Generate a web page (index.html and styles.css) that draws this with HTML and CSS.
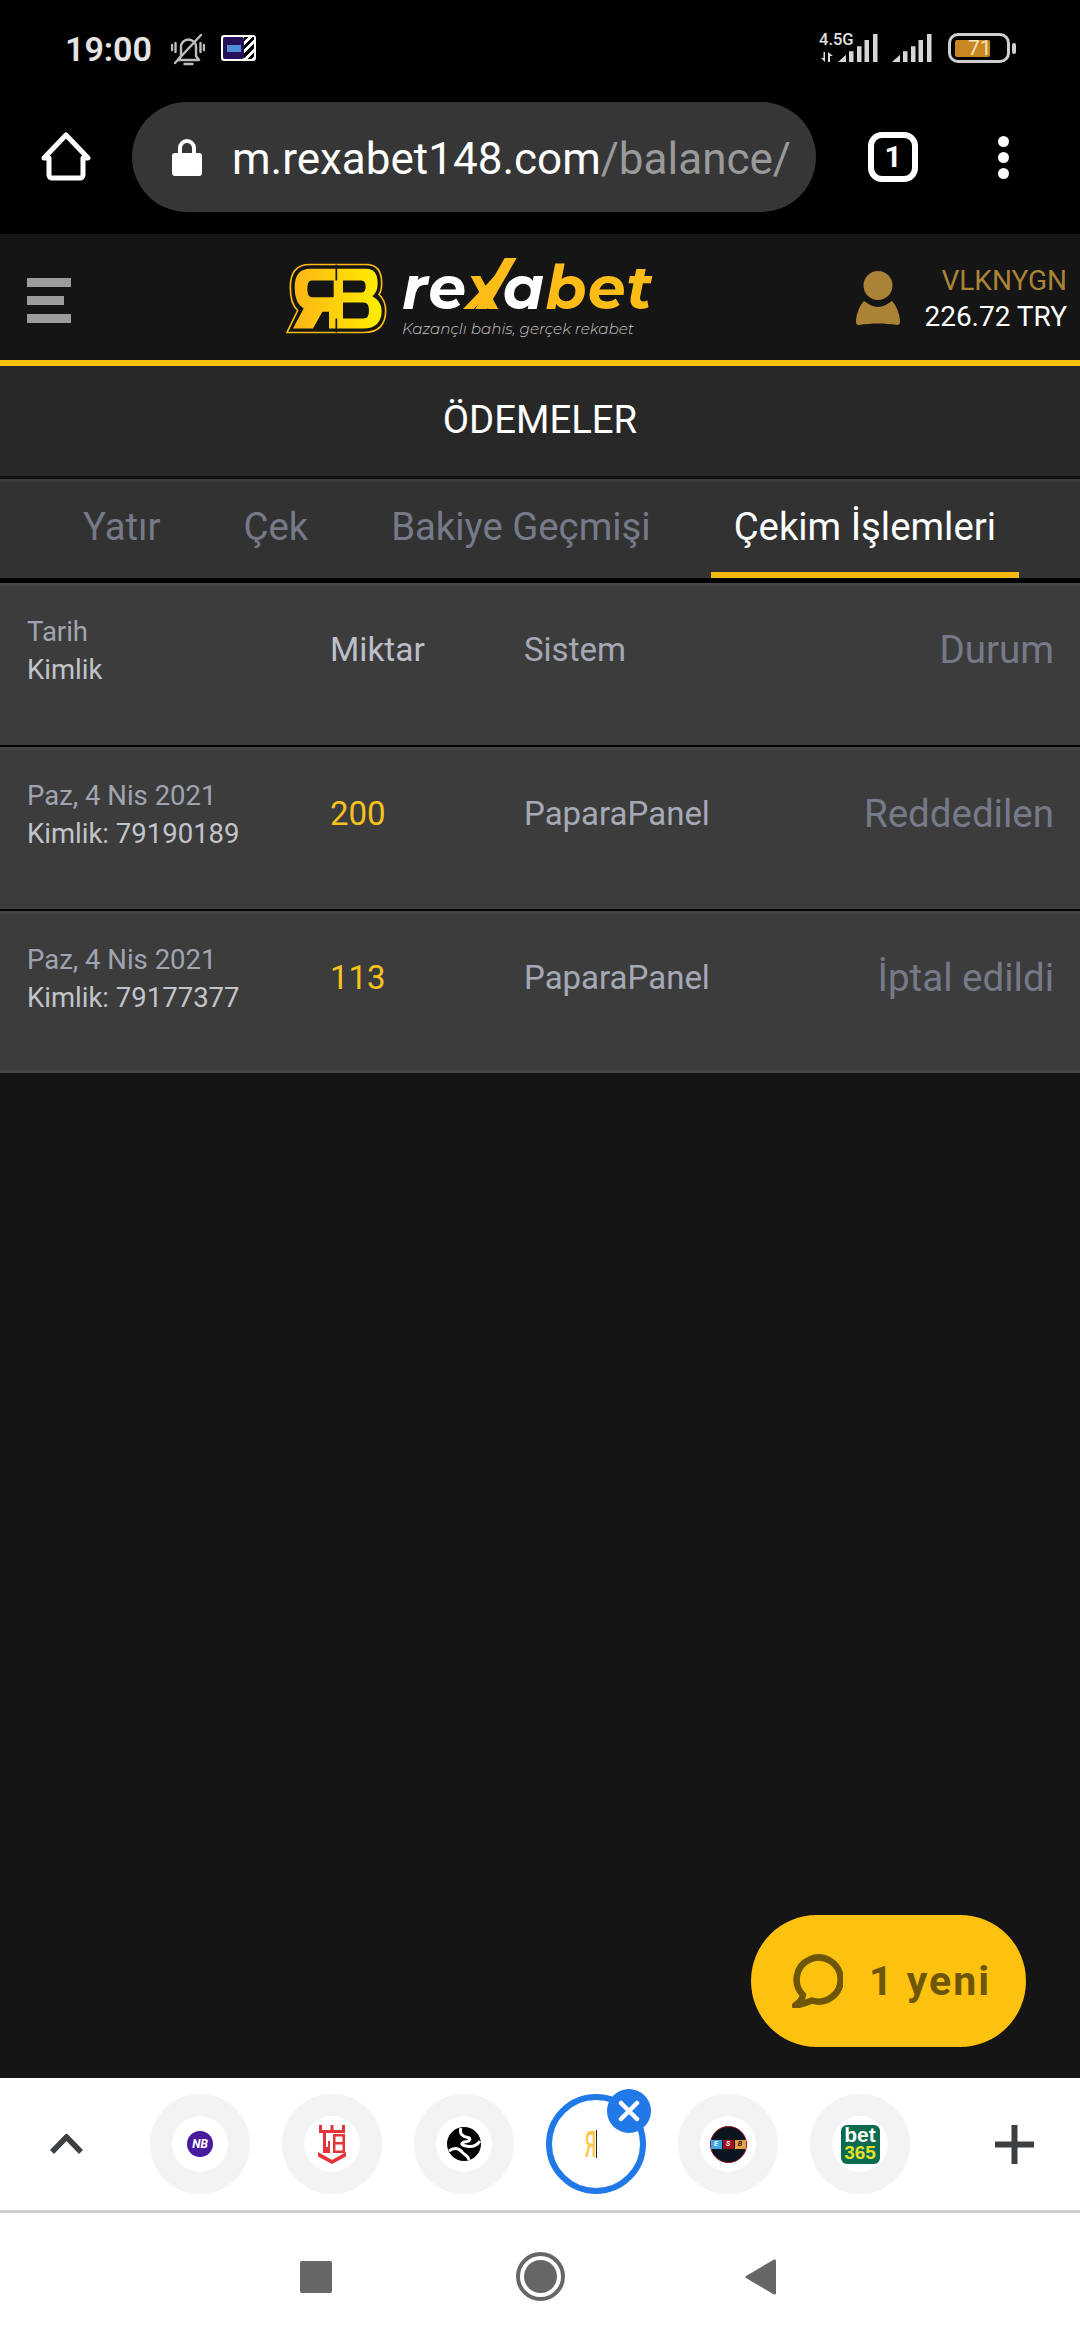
FILE: index.html
```html
<!DOCTYPE html>
<html lang="tr">
<head>
<meta charset="utf-8">
<title>Ödemeler</title>
<link rel="stylesheet" href="styles.css">
</head>
<body>
<div class="screen">
  <div class="chrome">
    <div class="statusbar">
      <span class="time">19:00</span>
      <svg class="bell" viewBox="0 0 34 33" fill="none" stroke="#bdbdbd" stroke-width="2.4" stroke-linecap="round" stroke-linejoin="round"><path d="M10 23V14a7.5 7.5 0 0 1 15 0v9l3 4H7z"/><path d="M13.500 31h8"/><path d="M4 30 30 2"/><path d="M1 12v5M4.500 10v9M33 12v5M29.500 10v9"/></svg>
      <div class="thumb"><div class="thumb-screen"><span class="thumb-dot"></span></div><div class="thumb-stripes"></div></div>
      <div class="status-right">
        <div class="net"><span class="net-label">4.5G</span><svg class="arrows" viewBox="0 0 12 10" fill="#ddd"><path d="M0 6h2.500V0h1.500v10zM7 0l5 4H9v6H7z"/></svg></div>
        <svg class="signal" viewBox="0 0 40 28" fill="#d6d6d6"><path d="M0 28 8 20.700V28zM11 17.300h4.500V28H11zM19 12.300h4.500V28H19zM26.500 6H31v22h-4.500zM35 0h4.500v28H35z"/></svg>
        <svg class="signal" viewBox="0 0 40 28" fill="#d6d6d6"><path d="M0 28 8 20.700V28zM11 17.300h4.500V28H11zM19 12.300h4.500V28H19zM26.500 6H31v22h-4.500zM35 0h4.500v28H35z"/></svg>
        <div class="battery"><div class="battery-fill"></div><span class="battery-text">71</span></div>
        <div class="battery-nub"></div>
      </div>
    </div>
    <div class="toolbar">
      <svg class="home" viewBox="0 0 50 50" fill="none" stroke="#fff" stroke-width="5" stroke-linejoin="round" stroke-linecap="round"><path d="M8 26H3L25 3l22 23h-5v17a3 3 0 0 1-3 3H11a3 3 0 0 1-3-3z"/></svg>
      <div class="address">
        <svg class="lock" viewBox="0 0 30 38" fill="#fff"><path d="M8 16V10a7 7 0 0 1 14 0v6" fill="none" stroke="#fff" stroke-width="4"/><rect y="15" width="30" height="23" rx="3"/></svg>
        <div class="url"><span class="url-host">m.rexabet148.com</span><span class="url-path">/balance/</span></div>
      </div>
      <div class="tabcount">1</div>
      <div class="dots"><span class="dot"></span><span class="dot"></span><span class="dot"></span></div>
    </div>
  </div>

  <header class="site-header">
    <div class="burger"><span class="bar"></span><span class="bar bar-short"></span><span class="bar"></span></div>
    <svg class="rb" viewBox="76 98 306 212">
      <defs><linearGradient id="rbg" x1="0" x2="1" y1="0" y2="0"><stop offset="0" stop-color="#fdb515"/><stop offset="1" stop-color="#ffee00"/></linearGradient></defs>
      <path d="M150 102H320Q366 102 366 158Q366 180 358 192Q378 210 378 240Q378 306 312 306H82L114 240Q92 220 92 170Q92 102 150 102Z" fill="none" stroke="#fdbc17" stroke-width="5"/>
      <path d="M152 115H320Q354 115 354 160Q354 185 338 197Q366 212 366 240Q366 294 310 294H208V244H188L160 294H100L132 234Q105 218 105 170Q105 115 152 115Z" fill="url(#rbg)"/>
      <path d="M155 150H222V200H155Q143 200 143 175Q143 150 155 150ZM250 150H305Q318 150 318 168Q318 186 305 186H250ZM250 216H312Q328 216 328 240Q328 264 312 264H250Z" fill="#151515"/>
      <path d="M230 102V150M230 264V306" stroke="#151515" stroke-width="5"/>
    </svg>
    <div class="brand">
      <div class="wordmark"><span class="w-white">re</span><span class="w-x">x</span><span class="w-white">a</span><span class="w-gold">bet</span></div>
      <div class="tagline">Kazançlı bahis, gerçek rekabet</div>
    </div>
    <div class="user">
      <svg class="avatar" viewBox="0 0 44 55" fill="#ab8337"><circle cx="22" cy="14.500" r="14.500"/><path d="M8 30c3 2 8 6 14 6s11-4 14-6c4 4 8 13 8 21 0 2-1 3-3 3-6-1-13-1.500-19-1.500S9 53 3 54c-2 0-3-1-3-3 0-8 4-17 8-21z"/></svg>
      <div class="user-text"><div class="username">VLKNYGN</div><div class="balance">226.72 TRY</div></div>
    </div>
  </header>

  <main class="main">
    <div class="title">ÖDEMELER</div>
    <nav class="tabs">
      <a class="tab">Yatır</a>
      <a class="tab">Çek</a>
      <a class="tab">Bakiye Geçmişi</a>
      <a class="tab tab-active">Çekim İşlemleri</a>
    </nav>
    <div class="table">
      <div class="row">
        <div class="c-date"><div class="date">Tarih</div><div class="id">Kimlik</div></div>
        <div class="c-head">Miktar</div>
        <div class="c-system">Sistem</div>
        <div class="c-status">Durum</div>
      </div>
      <div class="row">
        <div class="c-date"><div class="date">Paz, 4 Nis 2021</div><div class="id">Kimlik: 79190189</div></div>
        <div class="c-amount">200</div>
        <div class="c-system">PaparaPanel</div>
        <div class="c-status">Reddedilen</div>
      </div>
      <div class="row row-last">
        <div class="c-date"><div class="date">Paz, 4 Nis 2021</div><div class="id">Kimlik: 79177377</div></div>
        <div class="c-amount">113</div>
        <div class="c-system">PaparaPanel</div>
        <div class="c-status">İptal edildi</div>
      </div>
    </div>
    <div class="chat">
      <svg class="chat-icon" viewBox="0 0 51 54" fill="none" stroke="#6d5607" stroke-width="6.500" stroke-linecap="round" stroke-linejoin="round"><path d="M11 41A22 22 0 1 1 20 46.500C14 49 8 51 3 51.500 7 49 10 46 11 41Z"/></svg>
      <span class="chat-text">1 yeni</span>
    </div>
  </main>

  <div class="tabstrip">
    <svg class="chevron" viewBox="0 0 33 20" fill="none" stroke="#3c4043" stroke-width="5.500"><path d="M2 18 16.500 3 31 18"/></svg>
    <div class="bubble"><div class="fav"><span class="fav-nb">NB</span></div></div>
    <div class="bubble"><div class="fav">
      <svg class="fav-tb" viewBox="0 0 28 39" fill="#e5343a"><path d="M1 0h3v5h8.500V0h3v5H24V0h3v8H1zM5 8h3v14h2v-6h2v12H5zM15 9h12v19H15zM17.500 11.500V17h7v-5.500zM17.500 19.500v6h7v-6zM0 27l14 8 14-8v4.500L14 39 0 31.500z" fill-rule="evenodd"/></svg>
    </div></div>
    <div class="bubble"><div class="fav">
      <svg class="fav-globe" viewBox="0 0 34 34"><circle cx="17" cy="17" r="17" fill="#000"/><path d="M14 1C12 7 16 10 21 10.500C24 11 23 14 20 14.500C15 15 13 17 17 18.500C22 20 29 20 33 14M2 24C7 20 12 21 15 25C17 28 21 28 22 33" fill="none" stroke="#fff" stroke-width="3"/></svg>
    </div></div>
    <div class="bubble bubble-active">
      <span class="fav-r">Я</span><span class="fav-line"></span>
      <div class="close"><svg class="close-x" viewBox="0 0 22 22" stroke="#fff" stroke-width="4.500" stroke-linecap="round"><path d="M3 3 19 19M19 3 3 19"/></svg></div>
    </div>
    <div class="bubble"><div class="fav"><div class="fav-esb"><span class="esb e1">E</span><span class="esb e2">S</span><span class="esb e3">B</span></div></div></div>
    <div class="bubble"><div class="fav"><div class="fav-bet"><span class="bet-top">bet</span><span class="bet-bot">365</span></div></div></div>
    <svg class="plus" viewBox="0 0 39 39" fill="#3c4043"><path d="M16.500 0h6v16.500H39v6H22.500V39h-6V22.500H0v-6h16.500z"/></svg>
  </div>
  <div class="navbar">
    <div class="nav-square"></div>
    <div class="nav-circle"><div class="nav-dot"></div></div>
    <svg class="nav-back" viewBox="0 0 31 36" fill="#666"><path d="M29 0.500Q31 0 31 2V34Q31 36 29 35.500L1 19Q0 18 1 17Z"/></svg>
  </div>
</div>
</body>
</html>
```
FILE: styles.css
```css
* { box-sizing: border-box; }
html, body { margin: 0; padding: 0; }
body { font-family: Roboto, "Liberation Sans", sans-serif; background: #151515; }
.screen { width: 1080px; height: 2340px; display: flex; flex-direction: column; overflow: hidden; background: #151515; }

/* browser chrome */
.chrome { background: #000; height: 234px; flex: none; }
.statusbar { height: 102px; display: flex; align-items: flex-start; padding-left: 65px; }
.time { font-size: 34px; font-weight: 600; color: #e4e4e4; line-height: 34px; margin-top: 32px; width: 88px; }
.bell { width: 34px; height: 33px; margin-left: 18px; margin-top: 33px; }
.thumb { width: 35px; height: 26px; margin-left: 16px; margin-top: 35px; display: flex; background: #fff; border-radius: 3px; padding: 2px; }
.thumb-screen { flex: 1; background: #231257; border-radius: 2px; display: flex; align-items: center; justify-content: center; }
.thumb-dot { display: block; width: 14px; height: 7px; background: #4f8fd8; }
.thumb-stripes { width: 10px; background: repeating-linear-gradient(135deg, #000 0 3px, #fff 3px 6px); }
.status-right { margin-left: auto; padding-right: 64px; margin-top: 33px; display: flex; align-items: flex-start; }
.net { width: 33px; display: flex; flex-direction: column; margin-right: -14px; }
.net-label { font-size: 16.500px; font-weight: 500; color: #e0e0e0; line-height: 13px; white-space: nowrap; }
.arrows { width: 12px; height: 10px; margin-top: 6px; margin-left: 2px; }
.signal { width: 40px; height: 28px; margin-top: 1px; }
.signal + .signal { margin-left: 14px; }
.battery { width: 62px; height: 30px; margin-left: 16px; border: 3px solid #cfcfcf; border-radius: 10px; padding: 4px; display: flex; align-items: center; position: relative; }
.battery-fill { width: 35px; height: 17px; background: #c8871f; border-radius: 2px; }
.battery-text { position: absolute; left: 17px; top: 0; line-height: 24px; font-size: 21px; color: #f3e3c4; }
.battery-nub { width: 4px; height: 11px; background: #cfcfcf; border-radius: 2px; margin-left: 2px; margin-top: 10px; }

.toolbar { display: flex; align-items: center; height: 110px; padding-left: 41px; }
.home { width: 50px; height: 50px; flex: none; }
.address { width: 684px; height: 110px; margin-left: 41px; background: #363636; border-radius: 55px; display: flex; align-items: center; padding: 0 22px 0 40px; flex: none; }
.lock { width: 30px; height: 38px; flex: none; }
.url { margin-left: 30px; margin-top: 3px; font-size: 44px; line-height: 60px; white-space: nowrap; }
.url-host { color: #fff; }
.url-path { color: #9a9a9a; }
.tabcount { width: 50px; height: 50px; margin-left: 52px; border: 6px solid #fff; border-radius: 14px; color: #fff; font-size: 30px; font-weight: 700; line-height: 38px; text-align: center; flex: none; }
.dots { margin-left: 80px; display: flex; flex-direction: column; gap: 5px; flex: none; }
.dot { display: block; width: 11px; height: 11px; border-radius: 50%; background: #fff; }

/* site header */
.site-header { height: 132px; flex: none; border-bottom: 6px solid #fdc20f; background: #151515; display: flex; align-items: center; padding-left: 27px; position: relative; }
.burger { width: 44px; display: flex; flex-direction: column; gap: 9px; margin-top: 6px; }
.bar { display: block; height: 9px; background: #9c9c9c; }
.bar-short { width: 37px; }
.rb { width: 102px; height: 71px; margin-left: 214px; margin-top: 2px; flex: none; }
.brand { margin-left: 15px; display: flex; flex-direction: column; margin-top: 6px; }
.wordmark { font-family: Montserrat, "DejaVu Sans", sans-serif; font-style: italic; font-weight: 700; font-size: 60px; line-height: 58px; letter-spacing: 1px; white-space: nowrap; }
.w-white { color: #fff; }
.w-gold { color: #fdbc17; }
.w-x { color: #fdbc17; position: relative; }
.w-x::after { content: ""; position: absolute; left: 24px; top: 7px; width: 12px; height: 51px; background: #fdbc17; transform: skewX(-30deg); }
.tagline { font-family: Montserrat, Lato, sans-serif; font-style: italic; font-weight: 300; font-size: 15.200px; line-height: 24px; color: #c4c4c4; white-space: nowrap; }
.user { margin-left: auto; padding-right: 13px; display: flex; align-items: center; margin-top: 3px; }
.avatar { width: 44px; height: 55px; flex: none; }
.user-text { margin-left: 24px; text-align: right; font-size: 28px; line-height: 36px; }
.username { color: #ab8337; }
.balance { color: #fff; }

/* page */
.main { flex: 1; position: relative; display: flex; flex-direction: column; min-height: 0; }
.title { height: 113px; flex: none; background: #282828; border-bottom: 3px solid #111; color: #fff; font-size: 38.300px; text-align: center; line-height: 108px; }
.tabs { height: 104px; flex: none; background: #323232; border-top: 3px solid #3a3a3a; border-bottom: 5px solid #000; display: flex; gap: 37px; padding-left: 60px; }
.tab { display: block; height: 96px; padding: 0 23px; font-size: 38.300px; line-height: 90px; color: #767a88; white-space: nowrap; }
.tab-active { color: #fff; border-bottom: 6px solid #f5b90e; }
.table { display: flex; flex-direction: column; }
.row { height: 164px; flex: none; background: #3c3c3c; border-top: 3px solid #454545; border-bottom: 2px solid #000; display: grid; grid-template-columns: 303px 194px 1fr auto; align-items: center; padding: 0 26px 32px 27px; }
.row-last { border-bottom: 3px solid #454545; height: 162px; padding-bottom: 30px; }
.c-date { margin-top: 3px; }
.date { font-size: 27.500px; line-height: 38px; color: #a0a4b0; }
.id { font-size: 27.500px; line-height: 38px; color: #c2c4ca; }
.c-head { font-size: 33.500px; color: #bcbfc8; }
.c-amount { font-size: 33px; color: #f7c21c; }
.c-system { font-size: 33px; color: #a5a9b6; }
.c-status { font-size: 38.500px; color: #767a88; text-align: right; }

.chat { position: absolute; right: 54px; bottom: 31px; width: 275px; height: 132px; border-radius: 66px; background: #fdc20f; display: flex; align-items: center; padding-left: 41px; }
.chat-icon { width: 51px; height: 54px; flex: none; }
.chat-text { margin-left: 26px; font-size: 41px; font-weight: 700; color: #6d5607; letter-spacing: 2px; white-space: nowrap; }

/* tab strip */
.tabstrip { height: 135px; flex: none; background: #fff; border-bottom: 3px solid #cfd0d2; display: flex; align-items: center; padding: 0 46px 0 50px; }
.chevron { width: 33px; height: 20px; flex: none; margin-right: 67px; }
.bubble { width: 100px; height: 100px; flex: none; border-radius: 50%; background: #f1f3f4; margin-right: 32px; display: flex; align-items: center; justify-content: center; position: relative; }
.fav { width: 56px; height: 56px; border-radius: 50%; background: #fff; display: flex; align-items: center; justify-content: center; }
.fav-nb { width: 26px; height: 26px; border-radius: 50%; background: #4a1a9c; color: #fff; font-size: 12px; font-style: italic; font-weight: 700; line-height: 26px; text-align: center; }
.fav-tb { width: 28px; height: 39px; }
.fav-globe { width: 34px; height: 34px; }
.bubble-active { background: #fff; border: 6px solid #2079e6; }
.fav-r { display: block; width: 11px; margin-left: -11px; font-size: 37px; font-weight: 500; line-height: 37px; color: #fdc94a; transform: scaleX(0.5); transform-origin: left center; }
.fav-line { width: 1px; height: 28px; background: #222; }
.close { position: absolute; right: -11px; top: -11px; width: 44px; height: 44px; border-radius: 50%; background: #2079e6; display: flex; align-items: center; justify-content: center; }
.close-x { width: 22px; height: 22px; }
.fav-esb { width: 37px; height: 37px; border-radius: 50%; background: #0a1520; border: 1px solid #8a1020; display: flex; align-items: center; justify-content: center; gap: 1px; }
.esb { width: 11px; height: 9px; font-size: 7px; line-height: 9px; text-align: center; font-style: italic; font-weight: 700; color: #fff; }
.e1 { background: #3aa5e8; }
.e2 { background: #a01020; }
.e3 { background: #e8a040; color: #222; }
.fav-bet { width: 39px; height: 39px; border-radius: 6px; background: #0b6b4f; display: flex; flex-direction: column; align-items: center; font-family: "Liberation Sans", sans-serif; font-weight: 700; }
.bet-top { color: #fff; font-size: 21px; line-height: 19px; }
.bet-bot { color: #e4e02a; font-size: 19px; line-height: 18px; }
.plus { width: 39px; height: 39px; flex: none; margin-left: auto; }

/* system nav */
.navbar { height: 127px; flex: none; background: #fff; display: flex; align-items: center; padding-left: 300px; }
.nav-square { width: 32px; height: 32px; background: #666; border-radius: 2px; }
.nav-circle { width: 49px; height: 49px; margin-left: 184px; border: 4px solid #666; border-radius: 50%; display: flex; align-items: center; justify-content: center; }
.nav-dot { width: 33px; height: 33px; border-radius: 50%; background: #666; }
.nav-back { width: 31px; height: 36px; margin-left: 180px; }
```
